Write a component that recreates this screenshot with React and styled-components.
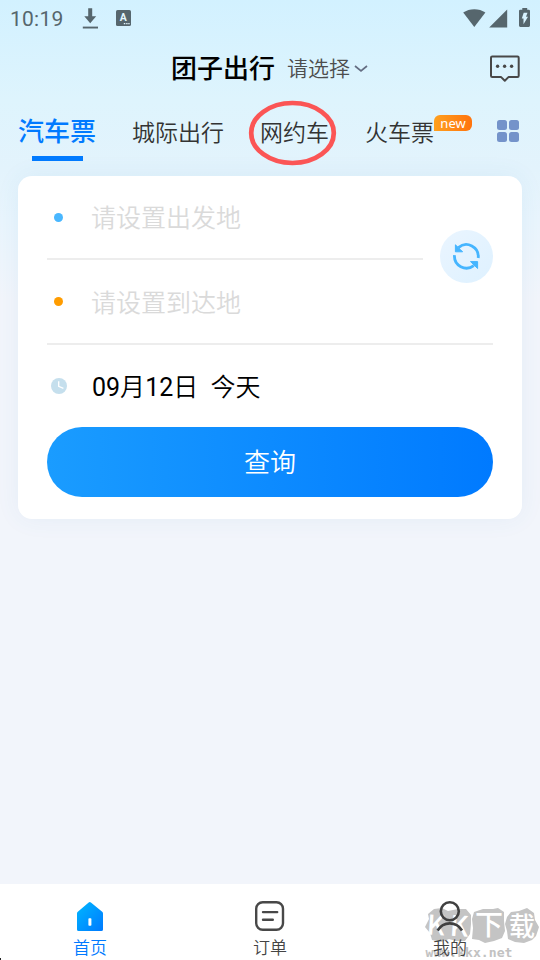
import React from 'react';
import styled, { createGlobalStyle } from 'styled-components';

const GlobalStyle = createGlobalStyle`
  * {
    box-sizing: border-box;
  }

  body {
    margin: 0;
    font-family: Roboto, 'Noto Sans CJK SC', sans-serif;
    background-color: #f2f5fb;
  }

  button {
    font-family: inherit;
    border: none;
    padding: 0;
    cursor: pointer;
  }

  svg {
    display: block;
    flex-shrink: 0;
  }
`;

const Page = styled.div`
  display: flex;
  flex-direction: column;
  width: 540px;
  height: 960px;
  overflow: hidden;
  background: linear-gradient(180deg, #d2f1ff 0, #def4fd 100px, #e3f3fc 170px, #e9f5fd 220px, #f2f5fb 300px);
`;

const StatusBar = styled.div`
  display: flex;
  align-items: center;
  height: 36px;
  padding: 0 9px 0 10px;
  color: #56666d;
`;

const Time = styled.span`
  width: 72px;
  font-size: 21px;
  line-height: 36px;
  letter-spacing: 0.25px;
  padding-top: 1px;
`;

const Notices = styled.div`
  display: flex;
  align-items: center;
  gap: 17px;
`;

const StatusIcons = styled.div`
  display: flex;
  align-items: center;
  gap: 3px;
  margin-left: auto;

  svg:last-child {
    margin-left: 8px;
  }
`;

const TitleBar = styled.header`
  display: flex;
  align-items: center;
  height: 64px;
  padding: 0 20px 0 171px;
`;

const Title = styled.h1`
  margin: 0;
  padding-top: 2px;
  font-size: 26px;
  font-weight: 500;
  line-height: 36px;
  color: #000;
`;

const City = styled.button`
  display: flex;
  align-items: center;
  gap: 4px;
  margin-left: 12px;
  padding-top: 2px;
  background: none;
  font-size: 21px;
  font-weight: 350;
  line-height: 36px;
  color: #4d4d4d;
`;

const Message = styled.button`
  margin-left: auto;
  background: none;
`;

const Tabs = styled.nav`
  display: flex;
  align-items: flex-start;
  height: 76px;
  padding: 14px 20px 0 18px;
`;

const Tab = styled.div`
  position: relative;
  display: flex;
  flex-direction: column;
  align-items: center;
  margin-right: ${(p) => p.$gap}px;
  padding-top: ${(p) => (p.$active ? 0 : 2)}px;
  font-size: ${(p) => (p.$active ? 26 : 23)}px;
  font-weight: ${(p) => (p.$active ? 500 : 350)};
  line-height: 36px;
  white-space: nowrap;
  color: ${(p) => (p.$active ? '#007aff' : '#333')};
`;

const Underline = styled.span`
  width: 51px;
  height: 5px;
  margin-top: 6px;
  background-color: #007aff;
`;

const Mark = styled.svg`
  position: absolute;
  left: -12px;
  top: -14px;
`;

const NewBadge = styled.span`
  position: absolute;
  left: 69px;
  top: 1px;
  width: 38px;
  height: 16px;
  border-radius: 6px 6px 6px 0;
  background: linear-gradient(90deg, #ffa01e, #ff730d);
  color: #fff;
  font-family: 'Noto Sans', sans-serif;
  font-size: 13px;
  font-weight: 400;
  line-height: 16px;
  text-align: center;
`;

const Apps = styled.div`
  display: grid;
  grid-template-columns: 10px 10px;
  gap: 2px;
  margin: 6px 1px 0 auto;
`;

const AppDot = styled.span`
  height: 10px;
  border-radius: 2.5px;
  background-color: #7493ca;
`;

const Card = styled.main`
  height: 343px;
  margin: 0 18px;
  padding: 0 29px;
  border-radius: 14px;
  background-color: #fff;
  box-shadow: 0 0 24px rgba(60, 130, 180, 0.07);
`;

const From = styled.div`
  display: flex;
  justify-content: space-between;
  height: 84px;
`;

const Row = styled.div`
  display: flex;
  align-items: center;
  width: ${(p) => p.$width || '100%'};
  height: ${(p) => p.$height}px;
  border-bottom: ${(p) => (p.$line ? '2px solid #ededed' : 'none')};
`;

const Lead = styled.span`
  display: flex;
  justify-content: center;
  width: 23px;
  margin-right: 22px;
`;

const Dot = styled.span`
  width: 9px;
  height: 9px;
  border-radius: 50%;
  background-color: ${(p) => p.$color};
`;

const Placeholder = styled.span`
  margin-left: -1px;
  padding-top: 4px;
  font-size: 25px;
  font-weight: 350;
  line-height: 36px;
  color: #dadada;
`;

const DateText = styled.span`
  padding-top: 3px;
  font-size: 25px;
  font-weight: 350;
  line-height: 36px;
  white-space: pre;
  color: #000;
`;

const Num = styled.span`
  font-weight: 400;
`;

const Swap = styled.button`
  display: flex;
  align-items: center;
  justify-content: center;
  width: 53px;
  height: 53px;
  margin-top: 54px;
  border-radius: 50%;
  background: linear-gradient(135deg, #eaf5ff, #def1ff);
`;

const Search = styled.button`
  width: 100%;
  height: 70px;
  padding-top: 2px;
  border-radius: 35px;
  background: linear-gradient(90deg, #1a9cff, #007aff);
  color: #fff;
  font-size: 26px;
  font-weight: 350;
  line-height: 68px;
`;

const TabBar = styled.footer`
  position: relative;
  display: flex;
  height: 76px;
  margin-top: auto;
  background-color: #fff;
`;

const TabItem = styled.div`
  position: relative;
  display: flex;
  flex: 1;
  flex-direction: column;
  align-items: center;
  padding-top: 16px;
  font-size: 17px;
  font-weight: 350;
  line-height: 24px;
  color: ${(p) => (p.$active ? '#007aff' : '#444')};
`;

const TabLabel = styled.span`
  margin-top: 4px;
`;

const Watermark = styled.svg`
  position: absolute;
  right: 0;
  top: 20px;
`;

const Corner = styled.span`
  position: absolute;
  left: 0;
  bottom: 0;
  width: 1px;
  height: 2px;
  background-color: #222;
`;

const DownloadIcon = () => (
  <svg width="17" height="22" viewBox="0 0 17 22" fill="#56666d">
    <path d="M6.2 1.2h4v8h4L8.2 16.2 2.3 9.2h3.9z" />
    <path d="M.8 19.6h15.2v1.9H.8z" />
  </svg>
);

const KeyboardIcon = () => (
  <svg width="15" height="16" viewBox="0 0 15 16">
    <rect width="15" height="16" rx="1.6" fill="#56666d" />
    <text x="7.4" y="11.4" fill="#e4f7ff" fontSize="10.5" fontWeight="700" fontFamily="Roboto" textAnchor="middle">A</text>
    <path d="M7.8 13h1.5v1.3H7.8zM10.2 13h1.4v1.3h-1.4zM12.3 13h1.3v1.3h-1.3z" fill="#e4f7ff" />
  </svg>
);

const WifiIcon = () => (
  <svg width="23" height="19" viewBox="0 0 23 19" fill="#56666d">
    <path d="M0.2 3.6C6.5-1 16.1-1 22.4 3.6L11.3 18z" />
  </svg>
);

const SignalIcon = () => (
  <svg width="19" height="19" viewBox="0 0 19 19" fill="#56666d">
    <path d="M18.2 .5v18H.2z" />
  </svg>
);

const BatteryIcon = () => (
  <svg width="12" height="20" viewBox="0 0 12 20">
    <path d="M3.3 0h4.9v1.7h1.5q1.3 0 1.3 1.3v14.6q0 1.3-1.3 1.3H1.3Q0 18.9 0 17.6V3q0-1.3 1.3-1.3h2z" fill="#56666d" />
    <path d="M4.7 4.7h3.8L7 8.8h2L4.5 16.3V10.5H2.8z" fill="#d8f3ff" />
  </svg>
);

const MessageIcon = () => (
  <svg width="30" height="28" viewBox="0 0 30 28" fill="none" stroke="#484848" strokeWidth="2">
    <path d="M2.2 2.5h25.3q1.2 0 1.2 1.2v18q0 1.2-1.2 1.2H18.7l-3.9 3.8-3.9-3.8H2.2Q1 22.9 1 21.7v-18q0-1.2 1.2-1.2z" strokeLinejoin="round" />
    <g fill="#484848" stroke="none">
      <circle cx="7.6" cy="12.2" r="1.7" />
      <circle cx="14.6" cy="12.2" r="1.7" />
      <circle cx="21.6" cy="12.2" r="1.7" />
    </g>
  </svg>
);

const SwapIcon = () => (
  <svg width="28" height="28" viewBox="0 0 28 28">
    <g fill="none" stroke="#45b5ff" strokeWidth="2.8">
      <path d="M5.4 4.6A12 12 0 0 1 25.2 15" />
      <path d="M20.8 22.6A12 12 0 0 1 1.5 12.2" />
    </g>
    <path d="M2.4 1.8v7h7.2L7 6.2z" fill="#45b5ff" stroke="#45b5ff" strokeLinejoin="round" />
    <path d="M24.6 25.5v-6.9h-7.1L20 21z" fill="#45b5ff" stroke="#45b5ff" strokeLinejoin="round" />
  </svg>
);

const ClockIcon = () => (
  <svg width="16" height="16" viewBox="0 0 16 16">
    <circle cx="8" cy="8" r="8" fill="#c5dfed" />
    <path d="M7.7 3.3V8.4L12.4 10.4" fill="none" stroke="#fff" strokeWidth="1.3" />
  </svg>
);

const HomeIcon = () => (
  <svg width="28" height="32" viewBox="0 0 28 32">
    <defs>
      <linearGradient id="home" x1="0" y1="0" x2="1" y2="1">
        <stop offset="0.15" stopColor="#00aeff" />
        <stop offset="1" stopColor="#007aff" />
      </linearGradient>
    </defs>
    <path d="M12.7 2.6q1.1-1 2.2 0L26.2 11.8q.8.7.8 1.8v15.8q0 1.6-1.6 1.6H2.6q-1.6 0-1.6-1.6v-15.8q0-1.1.8-1.8z" fill="url(#home)" />
    <rect x="12.4" y="18.3" width="3" height="7.4" rx=".8" fill="#fff" />
  </svg>
);

const OrderIcon = () => (
  <svg width="30" height="32" viewBox="0 0 30 32" fill="none" stroke="#484848" strokeWidth="2.4" strokeLinecap="round">
    <rect x="1.2" y="2.2" width="26.8" height="27.6" rx="6.5" />
    <path d="M8 12.1h14.2M8 19.8h9.8" />
  </svg>
);

const UserIcon = () => (
  <svg width="28" height="32" viewBox="0 0 28 32" fill="none" stroke="#404040" strokeWidth="2.6">
    <circle cx="13.8" cy="11.2" r="9" />
    <path d="M1.6 30.5Q6 23.4 13.8 23.4T26 30.5" />
  </svg>
);

const KkxWatermark = () => (
  <Watermark width="118" height="56" viewBox="0 0 118 56">
    <g fill="#c4c4c4">
      <path d="M6 10L12 5l8-1 6 3 10-2 8 0 5 6 0 9-1 10-5 7-9 0-7-2-8 3-9-2-2-7-5-6 4-8z" />
      <path d="M52 8l9-3 10 0 5-1 6 4 0 9 1 10-3 7-8 3-9 2-6-3-7-1 1-11-1-9z" />
      <path d="M85 13l4-5 8-1 8-3 7 5 1 7 4 7-3 9-4 4-8 3-9-1-7-3-1-8-2-7z" />
    </g>
    <g fill="#fff" fontFamily="'Noto Sans CJK SC', sans-serif">
      <text x="5" y="31" fontSize="27" fontWeight="500" transform="rotate(4 14 20)">K</text>
      <text x="28" y="32" fontSize="28" fontWeight="500" transform="rotate(4 36 20)">K</text>
      <text x="53" y="31" fontSize="28" fontWeight="500">下</text>
      <text x="87" y="32" fontSize="26" fontWeight="500">载</text>
    </g>
    <text x="3.5" y="53" fill="#c2c2c2" fontSize="12" fontWeight="700" fontFamily="'DejaVu Sans Mono', monospace" textLength="87" lengthAdjust="spacingAndGlyphs">www.kkx.net</text>
  </Watermark>
);

const App = () => {
  return (
    <>
      <GlobalStyle />
      <Page>
        <StatusBar>
          <Time>10:19</Time>
          <Notices>
            <DownloadIcon />
            <KeyboardIcon />
          </Notices>
          <StatusIcons>
            <WifiIcon />
            <SignalIcon />
            <BatteryIcon />
          </StatusIcons>
        </StatusBar>

        <TitleBar>
          <Title>团子出行</Title>
          <City>
            请选择
            <svg width="14" height="8" viewBox="0 0 14 8" fill="none" stroke="#646d82" strokeWidth="1.7">
              <path d="M1 1l6 5 6-5" />
            </svg>
          </City>
          <Message><MessageIcon /></Message>
        </TitleBar>

        <Tabs>
          <Tab $active $gap={36}>汽车票<Underline /></Tab>
          <Tab $gap={36}>城际出行</Tab>
          <Tab $gap={36}>
            网约车
            <Mark width="90" height="66" viewBox="0 0 90 66" fill="none">
              <ellipse cx="44.5" cy="33" rx="41.3" ry="30" stroke="#fb5555" strokeWidth="4.7" />
            </Mark>
          </Tab>
          <Tab $gap={0}>火车票<NewBadge>new</NewBadge></Tab>
          <Apps>
            <AppDot />
            <AppDot />
            <AppDot />
            <AppDot />
          </Apps>
        </Tabs>

        <Card>
          <From>
            <Row $width="376px" $height={84} $line>
              <Lead><Dot $color="#49b7ff" /></Lead>
              <Placeholder>请设置出发地</Placeholder>
            </Row>
            <Swap><SwapIcon /></Swap>
          </From>
          <Row $height={85} $line>
            <Lead><Dot $color="#ff9c00" /></Lead>
            <Placeholder>请设置到达地</Placeholder>
          </Row>
          <Row $height={82}>
            <Lead><ClockIcon /></Lead>
            <DateText><Num>09</Num>月<Num>12</Num>日  今天</DateText>
          </Row>
          <Search>查询</Search>
        </Card>

        <TabBar>
          <KkxWatermark />
          <TabItem $active>
            <HomeIcon />
            <TabLabel>首页</TabLabel>
          </TabItem>
          <TabItem>
            <OrderIcon />
            <TabLabel>订单</TabLabel>
          </TabItem>
          <TabItem>
            <UserIcon />
            <TabLabel>我的</TabLabel>
          </TabItem>
          <Corner />
        </TabBar>
      </Page>
    </>
  );
};

export default App;
